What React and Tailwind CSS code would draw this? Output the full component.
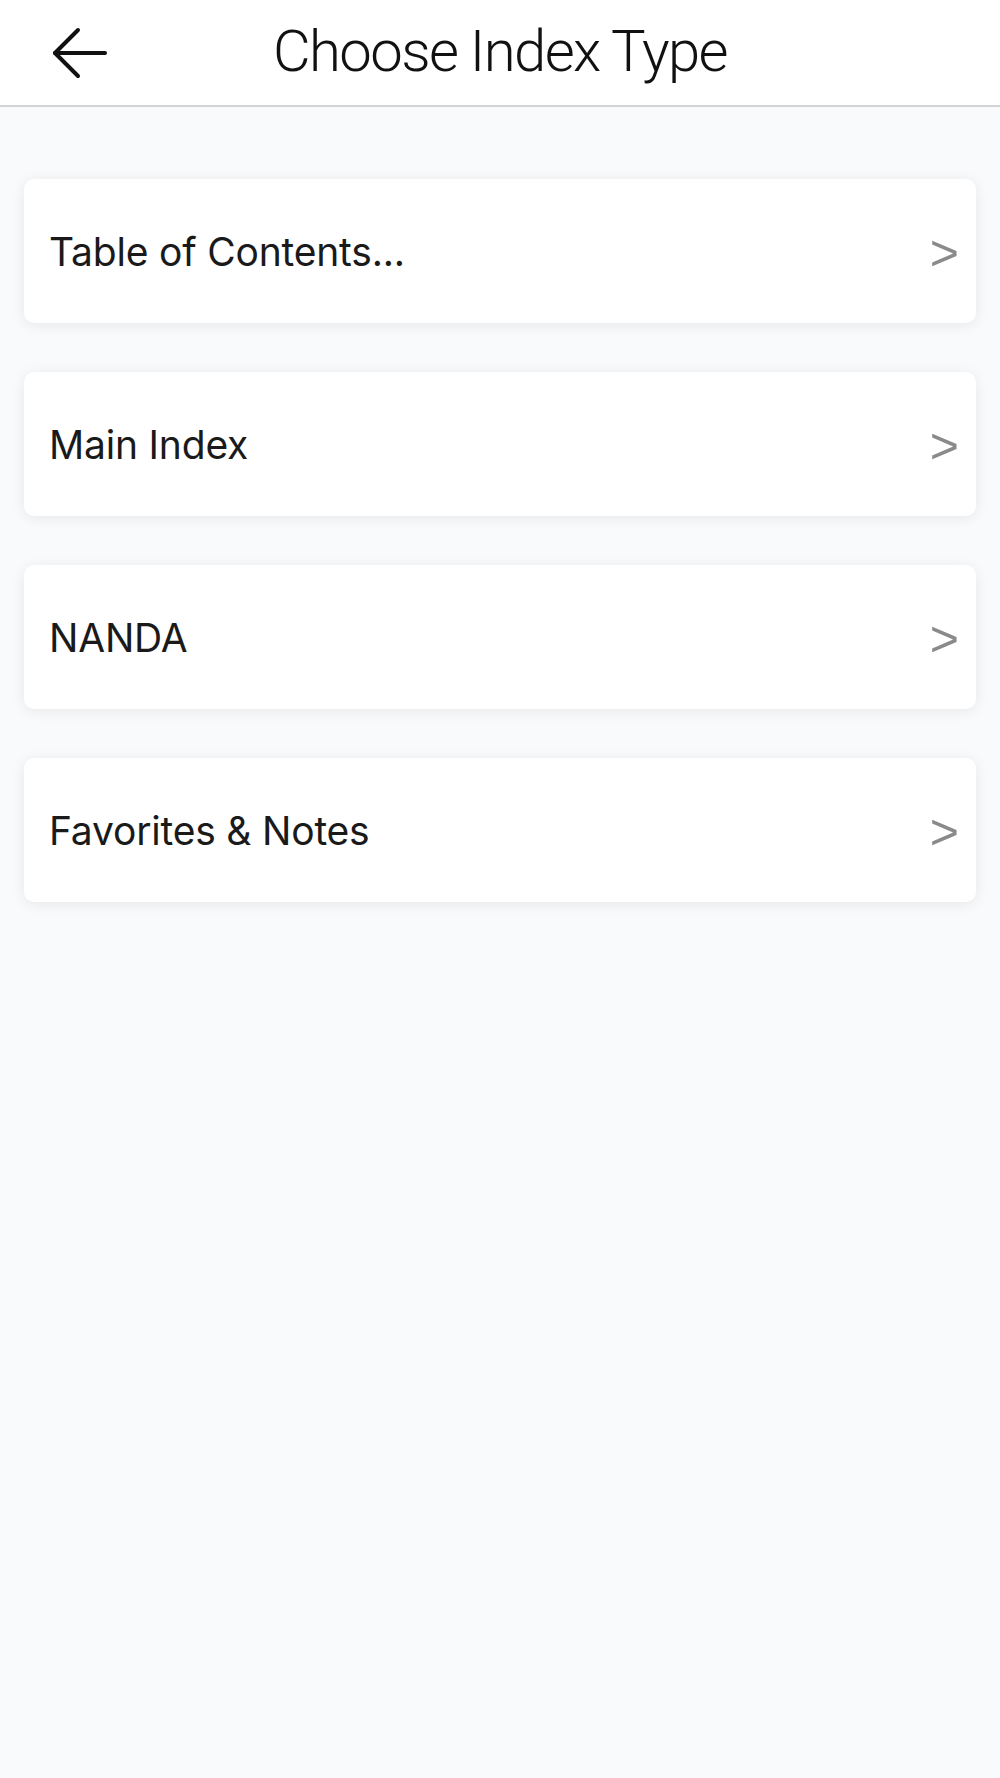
import React from 'react';

const items = ['Table of Contents...', 'Main Index', 'NANDA', 'Favorites & Notes'];

const BackArrow = () => (
  <svg width="60" height="56" viewBox="0 0 60 56" fill="none" stroke="#111" strokeWidth="4" strokeLinecap="round" strokeLinejoin="round">
    <path d="M55 28 H5" />
    <path d="M28 5 L5 28 L28 51" />
  </svg>
);

export default function App() {
  return (
    <div className="min-h-[1778px] w-[1000px] bg-[#f9fafc]" style={{ fontFamily: 'Inter, "Liberation Sans", sans-serif' }}>
      {/* HEADER */}
      <div className="relative h-[107px] bg-white border-b-2 border-[#d4d4d4] flex items-center justify-center">
        <button className="absolute left-[50px] top-[25px]">
          <BackArrow />
        </button>
        <h1 className="text-[58px] font-light text-[#111] tracking-[-1.6px] leading-none pb-[4px]" style={{ fontFamily: 'Roboto, "Liberation Sans", sans-serif' }}>
          Choose Index Type
        </h1>
      </div>

      {/* LIST */}
      <div className="flex flex-col gap-[49px] px-[24px] pt-[72px]">
        {items.map((label) => (
          <div
            key={label}
            className="h-[144px] bg-white rounded-[10px] shadow-[0_2px_14px_rgba(0,0,0,0.08)] flex items-center justify-between pl-[25px] pr-[17px]"
          >
            <span className="text-[39px] text-[#1a1a1a] tracking-[-0.2px] pt-[2px]">{label}</span>
            <span className="text-[50px] leading-none text-[#8a8a8a] pt-[4px]" style={{ fontFamily: '"Liberation Sans", sans-serif' }}>&gt;</span>
          </div>
        ))}
      </div>
    </div>
  );
}
